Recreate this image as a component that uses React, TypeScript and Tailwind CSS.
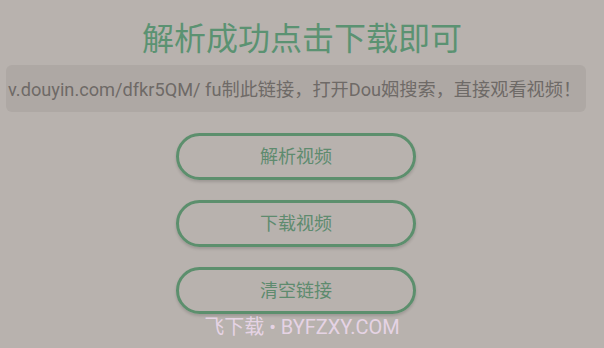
import React from 'react';

const font = { fontFamily: 'Roboto, "Noto Sans CJK SC", sans-serif' };

function ActionButton({ label }: { label: string }) {
  return (
    <button className="w-[240px] h-[47px] rounded-full border-[3px] border-[#5c8f6d] text-[18px] text-[#5e8b6e] shadow-[0_2px_3px_rgba(0,0,0,0.15)]">
      {label}
    </button>
  );
}

export default function App() {
  return (
    <div className="w-[604px] h-[348px] bg-[#b8b2ae] overflow-hidden relative" style={font}>
      <h1 className="pt-[19px] text-center text-[32px] leading-[40px] text-[#5b9272]">
        解析成功点击下载即可
      </h1>
      <div className="mt-[6px] ml-[6px] w-[580px] h-[47px] rounded-[6px] bg-[#aea8a4] flex items-center pl-[2px] pt-[2px]">
        <span className="whitespace-nowrap text-[18.2px] text-[#6e6a67]">
          v.douyin.com/dfkr5QM/ fu制此链接，打开Dou姻搜索，直接观看视频！
        </span>
      </div>
      <div className="mt-[21px] ml-[176px] flex flex-col items-start gap-[20px]">
        <ActionButton label="解析视频" />
        <ActionButton label="下载视频" />
        <ActionButton label="清空链接" />
      </div>
      <div className="absolute left-0 right-0 top-[312px] text-center text-[20px] text-[#ecd8ec]/90">
        飞下载 • BYFZXY.COM
      </div>
    </div>
  );
}
